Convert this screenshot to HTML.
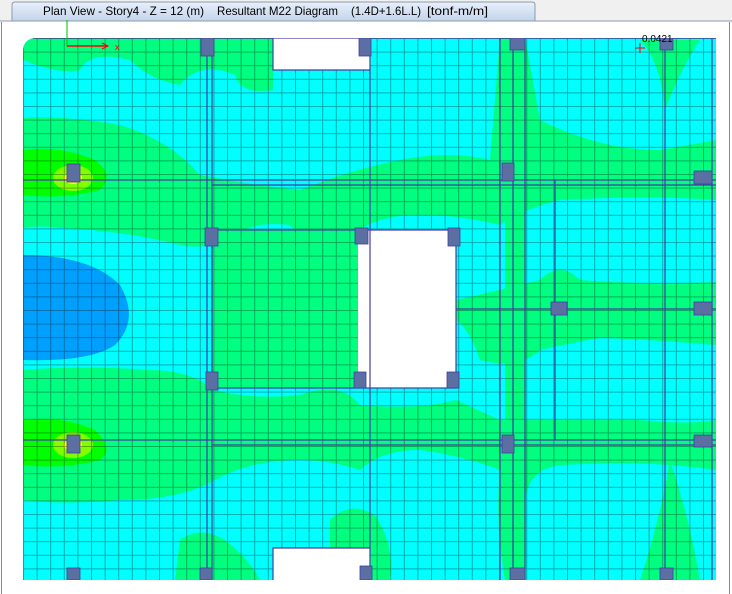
<!DOCTYPE html><html><head><style>
body{margin:0;width:732px;height:594px;overflow:hidden;background:#fff;font-family:"Liberation Sans",sans-serif}
</style></head><body>
<svg width="732" height="594" xmlns="http://www.w3.org/2000/svg" style="position:absolute;left:0;top:0">
<defs>
<linearGradient id="tab" x1="0" y1="0" x2="0" y2="1"><stop offset="0" stop-color="#e8f0fa"/><stop offset="1" stop-color="#c3d4ea"/></linearGradient>
<pattern id="grid" x="23" y="38" width="13.6" height="13.6" patternUnits="userSpaceOnUse"><path d="M0.5 0V13.6M0 0.5H13.6" stroke="#000" stroke-opacity="0.32" stroke-width="1" fill="none"/></pattern>
<clipPath id="pc"><path d="M23 52 Q23 38 37 38 H716 V580 H23 Z"/></clipPath>
</defs>
<rect x="0" y="0" width="732" height="21" fill="#f0f0f0"/>
<path d="M12 21 V5 Q12 2 15 2 H532 Q535 2 535 5 V21" fill="url(#tab)" stroke="#8a9bb0"/>
<line x1="0" y1="21" x2="732" y2="21" stroke="#8a9bb0"/>
<g font-size="12" fill="#000">
<text x="43" y="15" textLength="161" lengthAdjust="spacingAndGlyphs">Plan View - Story4 - Z = 12 (m)</text>
<text x="217" y="15" textLength="121" lengthAdjust="spacingAndGlyphs">Resultant M22 Diagram</text>
<text x="351" y="15" textLength="70" lengthAdjust="spacingAndGlyphs">(1.4D+1.6L.L)</text>
<text x="427" y="15" textLength="61" lengthAdjust="spacingAndGlyphs">[tonf-m/m]</text>
</g>
<line x1="1.5" y1="22" x2="1.5" y2="594" stroke="#888"/>
<line x1="729.5" y1="22" x2="729.5" y2="594" stroke="#888"/>
<g clip-path="url(#pc)">
<rect x="23" y="38" width="693" height="542" fill="#00ffff"/>
<g fill="#00ff80">
<path d="M23 38 H273 V90 Q240 95 235 75 Q200 60 180 85 Q150 80 130 60 Q90 50 80 70 Q60 75 23 60 Z"/>
<path d="M23 118 Q60 115 120 125 Q170 140 200 175 Q250 185 300 190 Q350 170 400 160 Q450 150 490 160 L500 38 H525 L540 120 Q600 150 660 150 L716 140 V200 Q650 195 560 200 Q520 210 500 225 Q460 215 420 215 Q380 215 360 230 Q300 240 290 225 Q250 220 230 240 Q200 250 180 245 Q120 230 60 228 Q40 225 23 228 Z"/>
<path d="M456 300 Q500 290 540 280 Q560 260 580 280 Q640 285 716 282 V345 Q660 340 600 338 Q560 345 540 350 Q520 370 480 360 Q470 330 456 320 Z"/>
<path d="M23 370 Q80 365 150 370 Q190 370 215 390 Q250 400 300 395 Q340 380 360 405 Q420 410 456 400 L500 420 Q560 420 640 420 Q690 425 716 420 V470 Q650 460 560 465 Q520 470 525 520 L520 580 H505 Q495 520 500 470 Q460 455 420 450 Q380 450 360 470 Q330 460 300 460 Q250 460 215 480 Q180 500 120 500 Q60 505 23 500 Z"/>
<path d="M330 520 Q350 500 375 515 Q395 545 390 580 H330 Z"/>
<path d="M180 540 Q200 525 225 540 Q250 560 260 580 H175 Z"/>
<path d="M640 580 Q660 520 670 460 Q690 520 700 580 Z"/>
<path d="M640 40 Q660 60 665 110 Q680 70 700 40 Z"/>
<rect x="212" y="230" width="146" height="158"/>
<path d="M505 38 H525 V580 H505 Z"/>
</g>
<g fill="#00ff00">
<path d="M23 150 Q60 145 95 160 Q115 175 100 190 Q60 200 23 195 Z"/>
<path d="M23 420 Q60 415 95 430 Q115 450 100 460 Q60 470 23 465 Z"/>
</g>
<g fill="#80ff00"><ellipse cx="73" cy="178" rx="20" ry="13"/><ellipse cx="73" cy="445" rx="20" ry="13"/></g>
<g fill="#ffff00"><ellipse cx="73" cy="178" rx="9" ry="6"/><ellipse cx="73" cy="445" rx="9" ry="6"/></g>
<path d="M23 255 Q90 255 120 285 Q140 320 115 345 Q90 362 23 360 Z" fill="#00a0ff"/>
<rect x="23" y="38" width="693" height="542" fill="url(#grid)"/>
<g fill="#fff"><rect x="273" y="38" width="97" height="32"/><rect x="358" y="230" width="98" height="158"/><rect x="273" y="548" width="97" height="32"/></g>
<g stroke="#4a3aa0" stroke-width="1.2" fill="none">
<path d="M273 38V70H370V38M23 38H716"/>
<path d="M273 580V548H370V580"/>
<rect x="212" y="230" width="244" height="158"/>
<path d="M207 38V580M212 38V580M370 70V548M500 38V580M513 38V580M525 38V580M665 38V580M712 38V580M555 180V440"/>
<path d="M23 180H716M212 185H716M456 309H716M23 440H716M212 445H716"/>
</g>
<g fill="#5b6fa3" stroke="#4040a0" stroke-width="0.8">
<rect x="201" y="38" width="13" height="18"/><rect x="359" y="38" width="12" height="18"/><rect x="510" y="38" width="15" height="12"/><rect x="660" y="38" width="13" height="12"/>
<rect x="67" y="164" width="13" height="18"/><rect x="205" y="228" width="13" height="18"/><rect x="355" y="228" width="13" height="16"/><rect x="448" y="228" width="12" height="18"/>
<rect x="502" y="163" width="12" height="18"/><rect x="694" y="171" width="18" height="13"/><rect x="551" y="302" width="16" height="13"/><rect x="694" y="302" width="18" height="13"/>
<rect x="206" y="372" width="12" height="18"/><rect x="354" y="372" width="12" height="16"/><rect x="447" y="372" width="12" height="16"/><rect x="67" y="435" width="13" height="18"/>
<rect x="502" y="435" width="12" height="18"/><rect x="694" y="435" width="18" height="12"/><rect x="67" y="568" width="13" height="12"/><rect x="200" y="568" width="12" height="12"/>
<rect x="360" y="566" width="12" height="14"/><rect x="510" y="568" width="15" height="12"/><rect x="660" y="568" width="13" height="12"/>
</g>
</g>
<path d="M67 20V46H108" stroke="#00c000" stroke-width="1" fill="none"/>
<path d="M67 46H108" stroke="#f00" stroke-width="1.5"/><path d="M102 43L108 46L102 49" stroke="#f00" fill="none"/>
<text x="115" y="50" font-size="9" fill="#f00">x</text>
<path d="M635 48H645M640 43V53" stroke="#f00"/>
<text x="642" y="42" font-size="10" fill="#000">0.0421</text>
</svg>
</body></html>
